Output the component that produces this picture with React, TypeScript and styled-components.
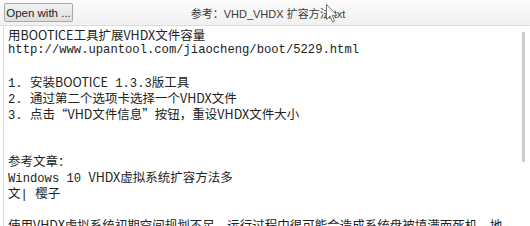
import styled, { createGlobalStyle } from 'styled-components';

type Segment = { text: string; cjk?: boolean };

const LINES: Segment[][] = [
  [{ text: '用BOOTICE工具扩展VHDX文件容量', cjk: true }],
  [{ text: 'http://www.upantool.com/jiaocheng/boot/5229.html' }],
  [],
  [{ text: '1. ' }, { text: '安装BOOTICE', cjk: true }, { text: ' 1.3.3' }, { text: '版工具', cjk: true }],
  [{ text: '2. ' }, { text: '通过第二个选项卡选择一个VHDX文件', cjk: true }],
  [{ text: '3. ' }, { text: '点击“VHD文件信息”按钮，重设VHDX文件大小', cjk: true }],
  [],
  [],
  [{ text: '参考文章：', cjk: true }],
  [{ text: 'Windows 10 ' }, { text: 'VHDX虚拟系统扩容方法多', cjk: true }],
  [{ text: '文', cjk: true }, { text: '| ' }, { text: '樱子', cjk: true }],
  [],
  [{ text: '使用VHDX虚拟系统初期空间规划不足，运行过程中很可能会造成系统盘被填满而死机，地', cjk: true }],
];

const GlobalStyle = createGlobalStyle`
  html, body {
    margin: 0;
    padding: 0;
    overflow: hidden;
    background: #ffffff;
  }
`;

const Window = styled.div`
  display: flex;
  flex-direction: column;
  width: 530px;
  height: 226px;
  overflow: hidden;
  background: #ffffff;
`;

const TopBar = styled.div`
  position: relative;
  display: grid;
  grid-template-columns: 1fr auto 1fr;
  align-items: center;
  height: 26px;
  padding: 0 4px;
  box-sizing: border-box;
  background: linear-gradient(#fbfbfb, #f1f1f1);
  border-bottom: 1px solid #dcdcdc;
`;

const OpenButton = styled.button`
  justify-self: start;
  width: 69px;
  height: 19px;
  padding: 0;
  border: 1px solid #a9a9a9;
  border-radius: 2px;
  background: linear-gradient(#f2f2f2, #dedede);
  font-family: 'Liberation Sans', Arial, sans-serif;
  font-size: 11.5px;
  color: #222;
`;

const Title = styled.div`
  padding-left: 6px;
  font-family: 'Liberation Sans', 'Noto Sans CJK SC', sans-serif;
  font-size: 11px;
  color: #3a3a3a;
  white-space: pre;
`;

const Pointer = styled.svg`
  position: absolute;
  left: 326px;
  top: 4px;
`;

const Editor = styled.div`
  position: relative;
  flex: 1;
  margin-left: 3px;
  padding: 1px 0 0 4px;
  border-left: 1px solid #d9d9d9;
  overflow: hidden;
`;

const Line = styled.div`
  height: 15.8px;
  line-height: 15.8px;
  white-space: pre;
  font-family: 'Liberation Mono', 'Noto Sans CJK SC', monospace;
  font-size: 12.2px;
  color: #222;
`;

const Cjk = styled.span`
  font-family: 'Noto Sans CJK SC', sans-serif;
  font-size: 12.5px;
  line-height: 15.8px;
`;

const ScrollThumb = styled.div`
  position: absolute;
  right: 5px;
  top: 6px;
  width: 3px;
  height: 130px;
  background: #cdcdcd;
`;

const App = () => {
  return (
    <Window>
      <GlobalStyle />
      <TopBar>
        <OpenButton>Open with ...</OpenButton>
        <Title>参考：VHD_VHDX 扩容方法.txt</Title>
        <span />
        <Pointer width="12" height="19" viewBox="0 0 12 19">
          <path
            d="M0.5 0.5 L0.5 15.5 L4 12 L6.5 17.8 L8.6 16.9 L6.2 11.3 L11 11.3 Z"
            fill="#ffffff"
            stroke="#707070"
            strokeWidth="1"
          />
        </Pointer>
      </TopBar>
      <Editor>
        {LINES.map((segments, i) => (
          <Line key={i}>
            {segments.map((seg, j) =>
              seg.cjk ? <Cjk key={j}>{seg.text}</Cjk> : <span key={j}>{seg.text}</span>
            )}
          </Line>
        ))}
        <ScrollThumb />
      </Editor>
    </Window>
  );
};

export default App;
